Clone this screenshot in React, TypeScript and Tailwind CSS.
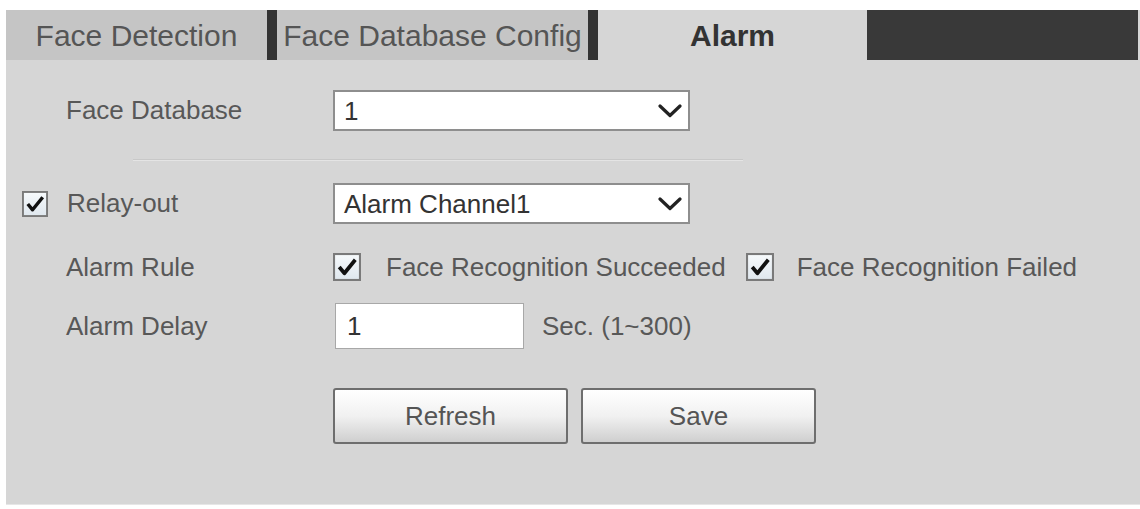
function Chevron() {
  return (
    <svg width="24" height="14" viewBox="0 0 24 14" className="shrink-0">
      <path d="M2 2 L12 11.5 L22 2" fill="none" stroke="#222" strokeWidth="3.2" strokeLinecap="round" strokeLinejoin="round" />
    </svg>
  )
}

function Check({ size = 27 }: { size?: number }) {
  return (
    <svg width={size} height={size} viewBox="0 0 27 27" className="shrink-0">
      <defs>
        <linearGradient id="cbg" x1="0" y1="0" x2="0" y2="1">
          <stop offset="0" stopColor="#f7fafc" />
          <stop offset="1" stopColor="#dfe7ee" />
        </linearGradient>
      </defs>
      <rect x="1" y="1" width="25" height="25" fill="url(#cbg)" stroke="#7a7a7a" strokeWidth="2" />
      <path d="M6 13.5 L11 19.5 L21.5 6.5" fill="none" stroke="#111" strokeWidth="3.6" strokeLinejoin="round" />
    </svg>
  )
}

function Select({ value }: { value: string }) {
  return (
    <div className="flex h-[41px] w-[357px] items-center justify-between border-2 border-[#8e8e8e] bg-white pl-[9px] pr-[6px]">
      <span className="text-[26px] leading-none text-[#333]">{value}</span>
      <Chevron />
    </div>
  )
}

function Button({ label }: { label: string }) {
  return (
    <button className="flex h-[56px] w-[235px] items-center justify-center rounded-[3px] border-2 border-[#6e6e6e] bg-linear-to-b from-white via-[#f1f1f1] to-[#cfcfcf] text-[26px] text-[#555]">
      {label}
    </button>
  )
}

export default function App() {
  return (
    <div className="h-[509px] w-[1140px] bg-white pl-[6px] pt-[10px] font-['Liberation_Sans',Arial,sans-serif]">
      <div className="h-[495px] w-[1134px] border-b border-[#e6e6e6] bg-[#d6d6d6]">
        {/* tabs */}
        <div className="flex h-[50px] text-[30px] text-[#555]">
          <div className="flex w-[261px] items-center justify-center bg-[#c5c5c5]">Face Detection</div>
          <div className="w-[10px] bg-[#333]" />
          <div className="flex w-[311px] items-center justify-center bg-[#c5c5c5]">Face Database Config</div>
          <div className="w-[10px] bg-[#333]" />
          <div className="flex w-[269px] items-center justify-center font-bold text-[#333]">Alarm</div>
          <div className="w-[271px] bg-[#393939]" />
        </div>

        <div className="text-[26px] text-[#585858]">
          {/* face database */}
          <div className="mt-[30px] flex items-center">
            <div className="w-[327px] pl-[60px]">Face Database</div>
            <Select value="1" />
          </div>

          <div className="ml-[127px] mt-[28px] h-[2px] w-[610px] border-t border-b border-t-[#c8c8c8] border-b-[#e4e4e4]" />

          {/* relay-out */}
          <div className="mt-[22px] flex items-center">
            <div className="flex w-[327px] items-center gap-[19px] pl-[16px]">
              <Check size={26} />
              <span>Relay-out</span>
            </div>
            <Select value="Alarm Channel1" />
          </div>

          {/* alarm rule */}
          <div className="mt-[28px] flex h-[30px] items-center">
            <div className="w-[327px] pl-[60px]">Alarm Rule</div>
            <div className="flex items-center">
              <Check size={28} />
              <span className="ml-[25px]">Face Recognition Succeeded</span>
              <span className="ml-[20px]">
                <Check size={28} />
              </span>
              <span className="ml-[23px]">Face Recognition Failed</span>
            </div>
          </div>

          {/* alarm delay */}
          <div className="mt-[21px] flex items-center">
            <div className="w-[327px] pl-[60px]">Alarm Delay</div>
            <div className="ml-[2px] flex h-[46px] w-[189px] items-center border border-[#a8a8a8] bg-white pl-[11px] text-[#333]">1</div>
            <span className="ml-[18px]">Sec. (1~300)</span>
          </div>

          {/* buttons */}
          <div className="ml-[327px] mt-[39px] flex gap-[13px]">
            <Button label="Refresh" />
            <Button label="Save" />
          </div>
        </div>
      </div>
    </div>
  )
}
